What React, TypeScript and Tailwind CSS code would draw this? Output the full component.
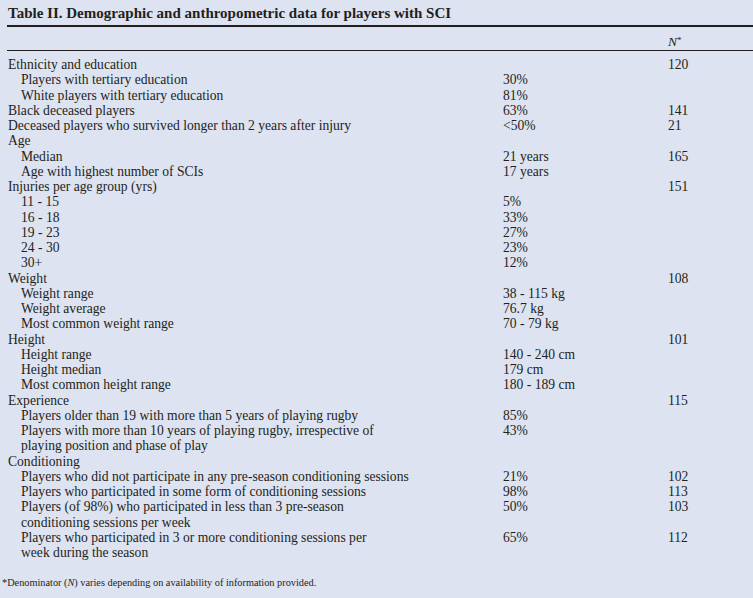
import React from "react";

type Row = {
  label: React.ReactNode;
  value?: string;
  n?: string;
  indent?: boolean;
};

const rows: Row[] = [
  { label: "Ethnicity and education", n: "120" },
  { label: "Players with tertiary education", value: "30%", indent: true },
  { label: "White players with tertiary education", value: "81%", indent: true },
  { label: "Black deceased players", value: "63%", n: "141" },
  { label: "Deceased players who survived longer than 2 years after injury", value: "<50%", n: "21" },
  { label: "Age" },
  { label: "Median", value: "21 years", n: "165", indent: true },
  { label: "Age with highest number of SCIs", value: "17 years", indent: true },
  { label: "Injuries per age group (yrs)", n: "151" },
  { label: "11 - 15", value: "5%", indent: true },
  { label: "16 - 18", value: "33%", indent: true },
  { label: "19 - 23", value: "27%", indent: true },
  { label: "24 - 30", value: "23%", indent: true },
  { label: "30+", value: "12%", indent: true },
  { label: "Weight", n: "108" },
  { label: "Weight range", value: "38 - 115 kg", indent: true },
  { label: "Weight average", value: "76.7 kg", indent: true },
  { label: "Most common weight range", value: "70 - 79 kg", indent: true },
  { label: "Height", n: "101" },
  { label: "Height range", value: "140 - 240 cm", indent: true },
  { label: "Height median", value: "179 cm", indent: true },
  { label: "Most common height range", value: "180 - 189 cm", indent: true },
  { label: "Experience", n: "115" },
  { label: "Players older than 19 with more than 5 years of playing rugby", value: "85%", indent: true },
  {
    label: (
      <>
        Players with more than 10 years of playing rugby, irrespective of
        <br />
        playing position and phase of play
      </>
    ),
    value: "43%",
    indent: true,
  },
  { label: "Conditioning" },
  { label: "Players who did not participate in any pre-season conditioning sessions", value: "21%", n: "102", indent: true },
  { label: "Players who participated in some form of conditioning sessions", value: "98%", n: "113", indent: true },
  {
    label: (
      <>
        Players (of 98%) who participated in less than 3 pre-season
        <br />
        conditioning sessions per week
      </>
    ),
    value: "50%",
    n: "103",
    indent: true,
  },
  {
    label: (
      <>
        Players who participated in 3 or more conditioning sessions per
        <br />
        week during the season
      </>
    ),
    value: "65%",
    n: "112",
    indent: true,
  },
];

export default function App() {
  return (
    <div
      className="w-[753px] h-[598px] overflow-hidden bg-[#dde3f0] text-[#231f20]"
      style={{ fontFamily: '"Liberation Serif", serif' }}
    >
      {/* Title */}
      <h1 className="pl-2 pt-[4px] h-[25px] text-[15px] leading-[18px] font-bold whitespace-nowrap">
        Table II. Demographic and anthropometric data for players with SCI
      </h1>
      <div className="ml-[7px] border-t-2 border-[#231f20]" />

      {/* Header */}
      <div className="ml-[7px] h-[24px] grid grid-cols-[661px_1fr] items-center pt-[5px] text-[13.5px] border-b border-[#231f20]">
        <span />
        <span className="italic">
          N<span className="not-italic text-[9px] align-[3px]">*</span>
        </span>
      </div>

      {/* Body */}
      <div className="pt-[6px] text-[13.6px] leading-[15.25px]">
        {rows.map((row, i) => (
          <div key={i} className="grid grid-cols-[503px_165px_1fr]">
            <div className={`whitespace-nowrap ${row.indent ? "pl-[21px]" : "pl-2"}`}>{row.label}</div>
            <div>{row.value}</div>
            <div>{row.n}</div>
          </div>
        ))}
      </div>

      {/* Footnote */}
      <p className="pl-[2px] mt-[17px] text-[10.3px] leading-[12px] whitespace-nowrap">
        *Denominator (<span className="italic">N</span>) varies depending on availability of information provided.
      </p>
    </div>
  );
}
